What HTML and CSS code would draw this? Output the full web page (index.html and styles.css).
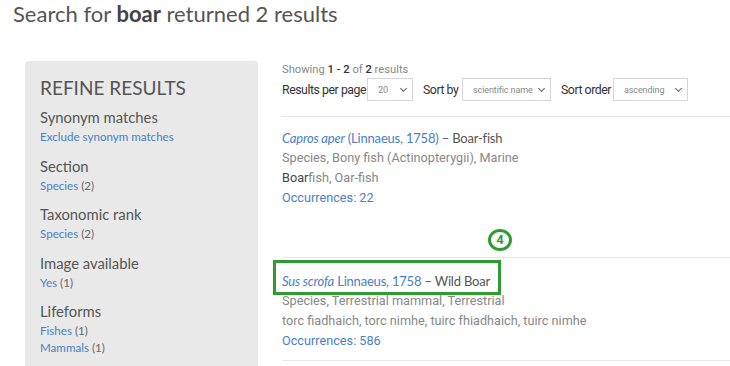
FILE: index.html
```html
<!DOCTYPE html>
<html lang="en">
    <head>
        <meta charset="UTF-8">
        <title>Search results</title>
        <link rel="stylesheet" href="styles.css">
    </head>
    <body>
        <h1 class="title">Search for <b>boar</b> returned 2 results</h1>

        <div class="container">
            <div class="refine">
                <h2>REFINE RESULTS</h2>
                <div class="group">
                    <h3>Synonym matches</h3>
                    <a href="#">Exclude synonym matches</a>
                </div>
                <div class="group">
                    <h3>Section</h3>
                    <a href="#">Species</a> <span>(2)</span>
                </div>
                <div class="group">
                    <h3>Taxonomic rank</h3>
                    <a href="#">Species</a> <span>(2)</span>
                </div>
                <div class="group">
                    <h3>Image available</h3>
                    <a href="#">Yes</a> <span>(1)</span>
                </div>
                <div class="group">
                    <h3>Lifeforms</h3>
                    <a href="#">Fishes</a> <span>(1)</span><br>
                    <a href="#">Mammals</a> <span>(1)</span>
                </div>
            </div>

            <div class="results">
                <div class="showing">Showing <b>1 - 2</b> of <b>2</b> results</div>
                <div class="controls">
                    <label class="l-num">Results per page</label>
                    <div class="select s-num">20 <span class="chev"></span></div>
                    <label class="l-sort">Sort by</label>
                    <div class="select s-sort">scientific name <span class="chev"></span></div>
                    <label class="l-order">Sort order</label>
                    <div class="select s-order">ascending <span class="chev"></span></div>
                </div>

                <div class="result">
                    <div class="name"><a href="#"><i>Capros aper</i> (Linnaeus, 1758)</a> – Boar-fish</div>
                    <div class="line">Species, Bony fish (Actinopterygii), Marine</div>
                    <div class="line"><span class="hl">Boar</span>fish, Oar-fish</div>
                    <a class="occ" href="#">Occurrences: 22</a>
                </div>

                <div class="step"><span>4</span></div>

                <div class="result last">
                    <div class="name"><span class="boxed"><a href="#"><i>Sus scrofa</i> Linnaeus, 1758</a> – Wild Boar</span></div>
                    <div class="line">Species, Terrestrial mammal, Terrestrial</div>
                    <div class="line">torc fiadhaich, torc nimhe, tuirc fhiadhaich, tuirc nimhe</div>
                    <a class="occ" href="#">Occurrences: 586</a>
                </div>
            </div>
        </div>
    </body>
</html>
```

FILE: styles.css
```css
body {
    margin: 0;
    padding: 0;
    font-family: Lato, sans-serif;
    color: #555;
    background: white;
    height: 366px;
    overflow: hidden;
}

a {
    color: #4a80c4;
    text-decoration: none;
}

.title {
    margin: 0;
    padding: 0 0 0 13px;
    font-size: 22px;
    font-weight: 400;
    line-height: 28px;
    color: #555;
}

.title b {
    font-weight: 700;
    color: #444;
}

.container {
    display: flex;
    margin-top: 33px;
    padding-left: 25px;
}

.refine {
    box-sizing: border-box;
    width: 233px;
    height: 310px;
    background-color: #e9e9e9;
    border-radius: 4px;
    padding: 13px 15px 0 15px;
    flex-shrink: 0;
}

.refine h2 {
    margin: 0 0 5px 0;
    font-size: 19px;
    font-weight: 400;
    line-height: 27px;
    color: #555;
}

.group {
    margin-bottom: 9.5px;
    font-size: 11.6px;
    line-height: 17px;
}

.group h3 {
    margin: 0;
    font-size: 14.8px;
    font-weight: 400;
    line-height: 22px;
    color: #555;
}

.group span {
    color: #666;
}

.results {
    margin-left: 24px;
    flex-grow: 1;
    font-family: Roboto, sans-serif;
    font-size: 12.7px;
}

.showing {
    color: #888;
    font-size: 11.2px;
    line-height: 16px;
    padding-top: 1px;
}

.showing b {
    color: #333;
    font-weight: 500;
}

.controls {
    display: flex;
    align-items: center;
    color: #333;
    font-size: 12.3px;
    letter-spacing: -0.45px;
    white-space: nowrap;
}

.controls label {
    margin-right: 3px;
}

.l-num {
    width: 82px;
}

.l-sort {
    width: 36px;
}

.l-order {
    width: 49px;
}

.select {
    box-sizing: border-box;
    display: flex;
    align-items: center;
    justify-content: space-between;
    height: 23px;
    border: 1px solid #d6d6d6;
    background: white;
    font-size: 9px;
    letter-spacing: -0.1px;
    color: #888;
    margin-right: 10px;
    padding: 0 6px 0 10px;
    flex-shrink: 0;
}

.s-num {
    width: 46px;
}

.s-sort {
    width: 89px;
}

.s-order {
    width: 75px;
}

.chev {
    width: 4px;
    height: 4px;
    border-right: 1.3px solid #666;
    border-bottom: 1.3px solid #666;
    transform: rotate(45deg);
    margin-top: -3px;
}

.result {
    border-top: 1px solid #e6e6e6;
    margin-top: 15px;
    padding-top: 11px;
    color: #888;
}

.result.last {
    margin-top: 6px;
    padding-top: 13px;
    border-bottom: 1px solid #e6e6e6;
    padding-bottom: 9px;
}

.name {
    font-family: Lato, sans-serif;
    font-size: 13px;
    letter-spacing: -0.2px;
    color: #555;
    line-height: 20px;
}

.boxed {
    position: relative;
    display: inline-block;
    line-height: 20px;
}

.boxed::after {
    content: "";
    position: absolute;
    left: -9px;
    right: -11px;
    top: -11px;
    bottom: -4px;
    border: 3px solid #2f9c2f;
}

.line {
    line-height: 20px;
}

.hl {
    color: #444;
}

.occ {
    display: block;
    line-height: 20px;
}

.step {
    margin: 21px 0 0 206px;
    width: 18px;
    height: 16px;
    border: 3px solid #2f9c2f;
    border-radius: 50%;
    color: #2f9c2f;
    font-size: 13px;
    font-weight: 700;
    line-height: 16px;
    text-align: center;
}
```
